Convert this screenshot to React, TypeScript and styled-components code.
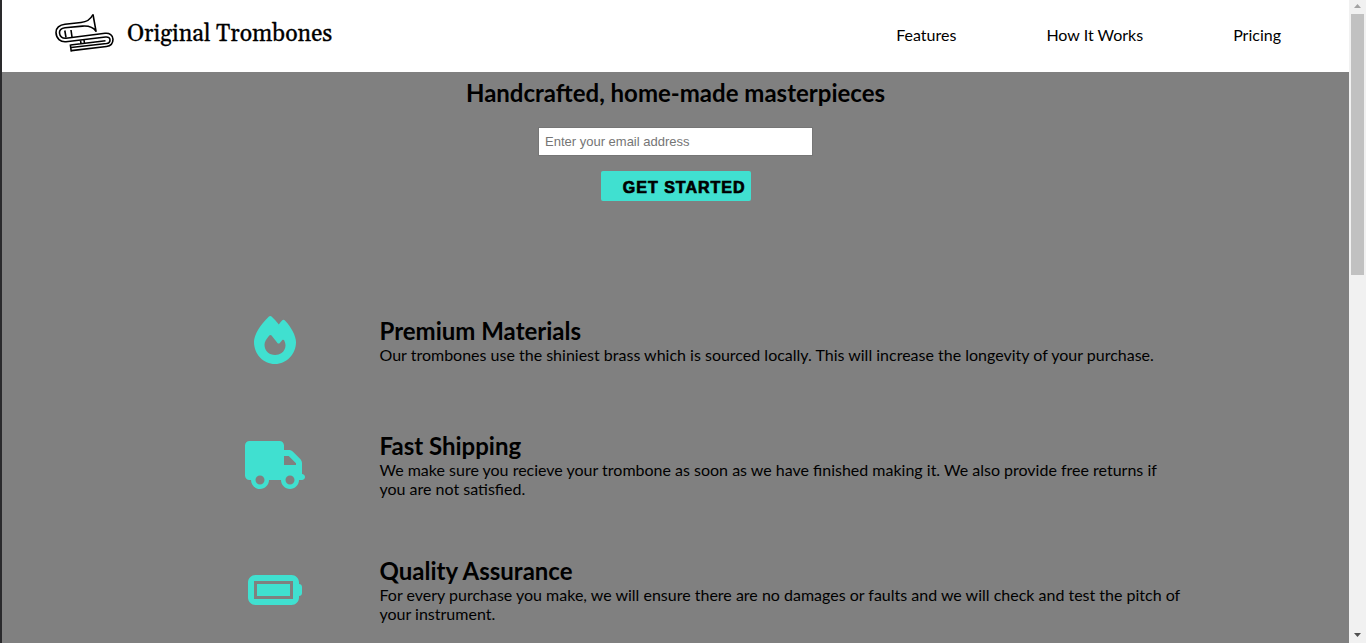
import React from 'react';
import styled, { createGlobalStyle } from 'styled-components';
import { FaFire } from 'react-icons/fa6';

const GlobalStyle = createGlobalStyle`
  * { box-sizing: border-box; margin: 0; padding: 0; }
  body { font-family: Lato, "Liberation Sans", sans-serif; font-size: 16px; line-height: 19px; color: #000; }
`;

const Viewport = styled.div`
  display: flex;
  height: 100vh;
  overflow: hidden;
  background: #808080;
  border-left: 2px solid #2a2a2c;
`;

const Page = styled.div`
  flex: 1;
  min-width: 0;
`;

const Header = styled.header`
  display: flex;
  align-items: center;
  justify-content: space-between;
  height: 72px;
  padding: 0 68px 4px 52px;
  background: #fff;
`;

const Brand = styled.a`
  display: flex;
  align-items: center;
  gap: 13px;
  padding-bottom: 2px;
  color: #000;
  text-decoration: none;
`;

const BrandName = styled.span`
  padding-top: 4px;
  font-family: Gelasio, "Liberation Serif", serif;
  font-size: 23px;
  line-height: 32px;
  -webkit-text-stroke: 0.3px #000;
`;

const Nav = styled.nav`
  display: flex;
  gap: 90px;
`;

const NavLink = styled.a`
  color: #000;
  text-decoration: none;
`;

const Hero = styled.section`
  display: flex;
  flex-direction: column;
  align-items: center;
  padding: 6px 16px 76px;
`;

const Heading = styled.h2`
  font-size: 24px;
  line-height: 29px;
  font-weight: 700;
`;

const SignUp = styled.form`
  display: flex;
  flex-direction: column;
  align-items: center;
  gap: 15px;
  width: 275px;
  max-width: 100%;
  margin-top: 20px;
`;

const EmailInput = styled.input`
  width: 100%;
  height: 29px;
  padding: 0 6px;
  border: 1px solid #767676;
  background: #fff;
  font-family: "Liberation Sans", Arial, sans-serif;
  font-size: 13px;
  &::placeholder { color: #757575; }
`;

const SubmitButton = styled.button`
  width: 150px;
  height: 30px;
  padding: 3px 5px 0;
  border: 0;
  border-radius: 2px;
  background: turquoise;
  color: #000;
  text-align: right;
  white-space: nowrap;
  font-family: "Liberation Sans", Arial, sans-serif;
  font-size: 16px;
  font-weight: 900;
  letter-spacing: 1px;
  -webkit-text-stroke: 0.7px #000;
`;

const Features = styled.section`
  max-width: 1012px;
  margin: 0 auto;
`;

const FeatureRow = styled.article`
  display: grid;
  grid-template-columns: 210px 1fr;
  align-items: center;
  min-height: 125px;
`;

const FeatureIcon = styled.div`
  display: flex;
  justify-content: center;
  color: turquoise;
  svg { display: block; height: 48px; width: auto; }
`;

const Scrollbar = styled.div`
  display: flex;
  flex-direction: column;
  align-items: center;
  width: 17px;
  background: #f1f1f1;
`;

const ScrollArrow = styled.svg`
  flex: none;
  width: 17px;
  height: 14px;
`;

const ScrollTrack = styled.div`
  flex: 1;
  width: 13px;
`;

const ScrollThumb = styled.div`
  height: 42.5%;
  background: #c1c1c1;
`;

const Trombone = () => (
  <svg width="60" height="40" viewBox="0 0 60 40" fill="none" stroke="#000" strokeWidth="1.6" strokeLinejoin="round" aria-hidden="true">
    <path d="M39 1.500C36.500 6.500 32.500 9 27 9.500L11 11.200C5.500 11.800 1.800 15.200 2 19.500C2.200 25.500 6.500 29.200 12 28.700L51.500 24C54.500 23.700 56 25 56 26.900C56 29 54.500 30.200 52.500 30.500L17 34.500" />
    <path d="M39 1.500L42 18.200C39.500 14.500 34 12.700 28.500 13.100L11 14.800C7.500 15.200 5.300 17.300 5.500 20C5.800 23.800 8.500 25.500 12 25.200L51 20.300C55.500 19.800 59 22.200 59 26.200C59 30.200 56.500 33 52.500 33.500L17.500 37.600" />
    <path d="M16.300 31.500L17.300 38.600M16.500 32L51.500 27.800M10.800 17.500L12 24.500M17 17L18 24M26.500 27.500L27 30.700M30 27L30.500 30.300" />
  </svg>
);

const Truck = () => (
  <svg viewBox="0 0 640 512" fill="currentColor" fillRule="evenodd" aria-hidden="true">
    <path d="M48 0C21.500 0 0 21.500 0 48V368C0 394.500 21.500 416 48 416H64C64 469 107 512 160 512S256 469 256 416H384C384 469 427 512 480 512S576 469 576 416H608C625.700 416 640 401.700 640 384S625.700 352 608 352V237.300C608 220.300 601.300 204 589.300 192L512 114.700C500 102.700 483.700 96 466.700 96H416V48C416 21.500 394.500 0 368 0ZM416 160H466.700L544 237.300V256H416ZM160 368A48 48 0 1 1 160 464A48 48 0 1 1 160 368ZM480 368A48 48 0 1 1 480 464A48 48 0 1 1 480 368Z" />
  </svg>
);

const BatteryFull = () => (
  <svg viewBox="0 0 576 512" fill="currentColor" fillRule="evenodd" aria-hidden="true">
    <path d="M80 96H464C508 96 544 132 544 176V192C562 192 576 206 576 224V288C576 306 562 320 544 320V336C544 380 508 416 464 416H80C36 416 0 380 0 336V176C0 132 36 96 80 96ZM64 160V352H480V160ZM96 192H448V320H96Z" />
  </svg>
);

const features = [
  {
    icon: <FaFire />,
    title: 'Premium Materials',
    text: 'Our trombones use the shiniest brass which is sourced locally. This will increase the longevity of your purchase.',
  },
  {
    icon: <Truck />,
    title: 'Fast Shipping',
    text: 'We make sure you recieve your trombone as soon as we have finished making it. We also provide free returns if you are not satisfied.',
  },
  {
    icon: <BatteryFull />,
    title: 'Quality Assurance',
    text: 'For every purchase you make, we will ensure there are no damages or faults and we will check and test the pitch of your instrument.',
  },
];

export default function App() {
  return (
    <>
      <GlobalStyle />
      <Viewport>
        <Page>
          <Header>
            <Brand href="#">
              <Trombone />
              <BrandName>Original Trombones</BrandName>
            </Brand>
            <Nav>
              <NavLink href="#features">Features</NavLink>
              <NavLink href="#how-it-works">How It Works</NavLink>
              <NavLink href="#pricing">Pricing</NavLink>
            </Nav>
          </Header>
          <main>
            <Hero>
              <Heading>Handcrafted, home-made masterpieces</Heading>
              <SignUp>
                <EmailInput type="email" aria-label="Email address" placeholder="Enter your email address" />
                <SubmitButton type="submit">GET STARTED</SubmitButton>
              </SignUp>
            </Hero>
            <Features id="features">
              {features.map((feature) => (
                <FeatureRow key={feature.title}>
                  <FeatureIcon>{feature.icon}</FeatureIcon>
                  <div>
                    <Heading>{feature.title}</Heading>
                    <p>{feature.text}</p>
                  </div>
                </FeatureRow>
              ))}
            </Features>
          </main>
        </Page>
        <Scrollbar aria-hidden="true">
          <ScrollArrow viewBox="0 0 17 14"><path d="M5 8h7L8.500 4z" fill="#a3a3a3" /></ScrollArrow>
          <ScrollTrack><ScrollThumb /></ScrollTrack>
          <ScrollArrow viewBox="0 0 17 14"><path d="M5 4h7L8.500 8z" fill="#505050" /></ScrollArrow>
        </Scrollbar>
      </Viewport>
    </>
  );
}
